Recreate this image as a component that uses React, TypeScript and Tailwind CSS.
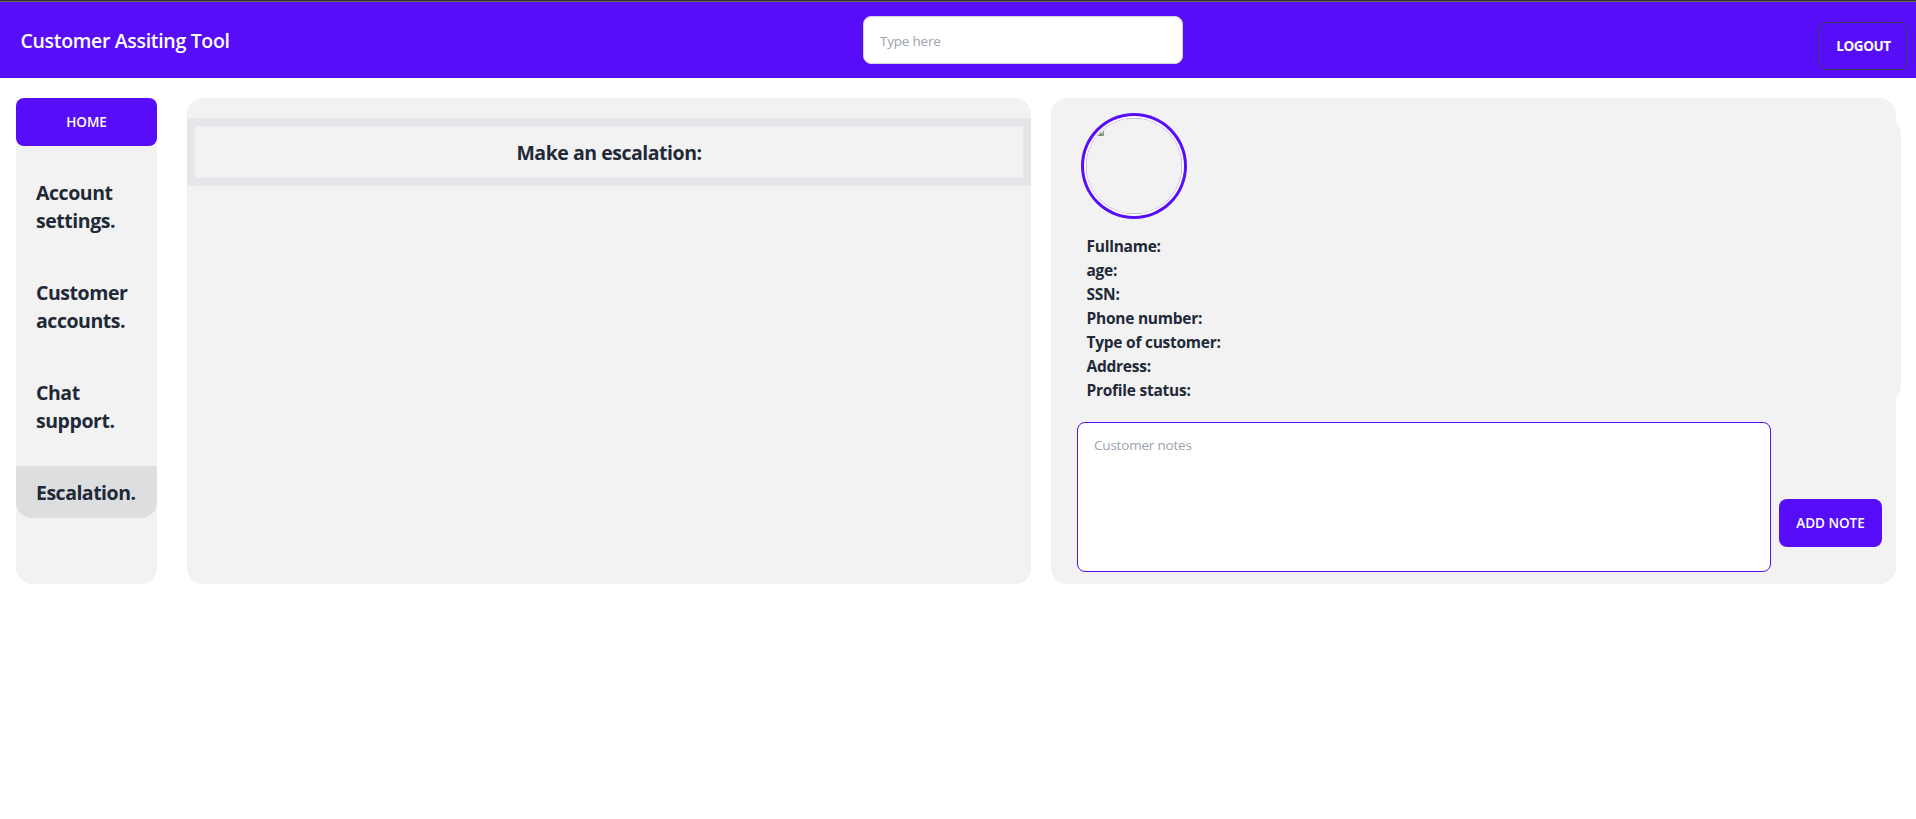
const menuItems = ['Account settings.', 'Customer accounts.', 'Chat support.'];

const profileFields = [
  'Fullname:',
  'age:',
  'SSN:',
  'Phone number:',
  'Type of customer:',
  'Address:',
  'Profile status:',
];

function Header() {
  return (
    <header className="flex h-[78px] items-start justify-between border-t border-[#333333] bg-[#570df8]">
      <div className="flex h-[77px] w-full items-start justify-between border-t border-[#666666]">
        <div className="flex h-[78px] w-[863px] items-center pl-[20.5px] text-[19.5px] leading-7 font-semibold tracking-[-0.32px] text-white">
          Customer Assiting Tool
        </div>
        <input
          type="text"
          placeholder="Type here"
          className="mt-[14px] h-12 w-80 rounded-lg border border-[#d2d4d7] bg-white px-4 pt-px text-[13.5px] tracking-[-0.2px] text-[#1f2937] placeholder-[#9ca3af] outline-none"
        />
        <div className="flex flex-1 justify-end pt-5 pr-2">
          <button className="h-12 w-[89px] rounded-lg border border-[#3d4451] text-[13.5px] font-bold tracking-[-0.4px] text-white">
            LOGOUT
          </button>
        </div>
      </div>
    </header>
  );
}

function Sidebar() {
  return (
    <nav className="flex h-[486px] w-[141px] flex-col gap-5 rounded-2xl bg-[#f2f2f2]">
      <button className="h-12 shrink-0 rounded-lg bg-[#570df8] text-[13.5px] font-semibold text-white">
        HOME
      </button>
      {menuItems.map((label) => (
        <a key={label} className="block w-[141px] px-5 pt-[13px] pb-[11px] text-[19.5px] leading-7 font-bold tracking-[-0.45px]">
          {label.split(' ').map((word) => (
            <span key={word} className="block">
              {word}
            </span>
          ))}
        </a>
      ))}
      <a className="block rounded-b-2xl bg-[#dddee0] px-5 pt-[13px] pb-[11px] text-[19.5px] leading-7 font-bold tracking-[-0.5px]">
        Escalation.
      </a>
    </nav>
  );
}

function Avatar() {
  return (
    <div className="ml-[35px] size-24 rounded-full ring-3 ring-[#570df8] ring-offset-2 ring-offset-white">
      <svg viewBox="0 0 96 96" className="size-24 rounded-full">
        <rect x="0.5" y="0.5" width="95" height="95" fill="none" stroke="#c0c0c0" />
        <circle cx="48" cy="48" r="47.8" fill="none" stroke="#d5c6f5" strokeWidth="0.6" strokeDasharray="4 2" />
        <path d="M12 18L17 13V18Z" fill="#c9dcd8" />
        <path d="M12 17.5L15 14.5L17 16.5V17.5Z" fill="#63a350" />
        <path d="M12 17.5H17.5V13" stroke="#8a8a8a" fill="none" />
      </svg>
    </div>
  );
}

function CustomerPanel() {
  return (
    <section className="flex h-[486px] w-[845px] flex-col rounded-2xl bg-[#f2f2f2] pt-5">
      <div className="h-[284px] w-[850px] rounded-2xl bg-[#f2f2f2]">
        <Avatar />
        <ul className="mt-5 pl-[35.5px] text-[15.5px] leading-6 font-bold tracking-[-0.25px]">
          {profileFields.map((field) => (
            <li key={field}>{field}</li>
          ))}
        </ul>
      </div>
      <div className="mt-5 flex items-center gap-2 pl-[26px]">
        <textarea
          placeholder="Customer notes"
          className="block h-[150px] w-[694px] resize-none rounded-lg border border-[#570df8] bg-white px-4 pt-3 text-[13.5px] leading-5 tracking-[-0.2px] placeholder-[#9ca3af] outline-none"
        />
        <button className="mt-[52px] h-12 w-[103px] rounded-lg bg-[#570df8] text-[13.5px] font-semibold text-white">
          ADD NOTE
        </button>
      </div>
    </section>
  );
}

export default function App() {
  return (
    <div className="h-[819px] w-full overflow-hidden bg-white font-['Open_Sans','Noto_Sans',sans-serif] text-[#1f2937]">
      <Header />
      <main className="flex pt-5 pl-4">
        <Sidebar />
        <section className="ml-[30px] h-[486px] w-[844px] rounded-2xl bg-[#f2f2f2] pt-5">
          <h2 className="h-[68px] border-8 border-[#e5e6ea] pt-[13px] text-center text-[19.5px] leading-7 font-bold tracking-[-0.47px]">
            Make an escalation:
          </h2>
        </section>
        <div className="ml-5">
          <CustomerPanel />
        </div>
      </main>
    </div>
  );
}
